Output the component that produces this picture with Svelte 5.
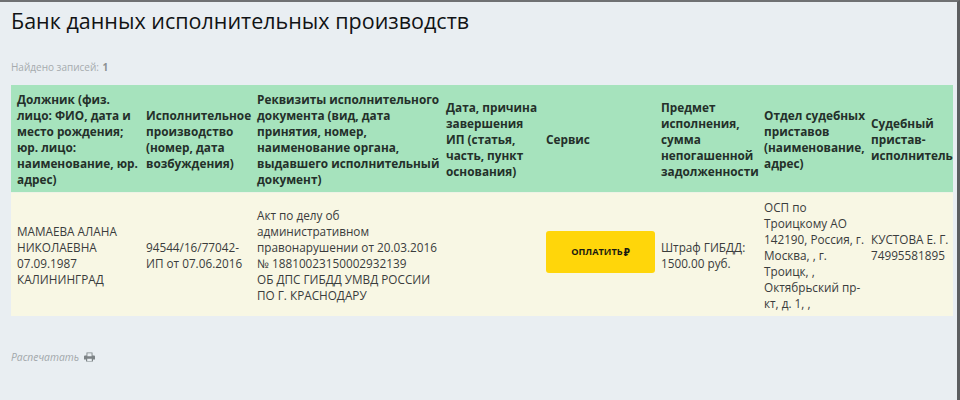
<script>
  const headers = [
    'Должник (физ. лицо: ФИО, дата и место рождения; юр. лицо: наименование, юр. адрес)',
    'Исполнительное производство (номер, дата возбуждения)',
    'Реквизиты исполнительного документа (вид, дата принятия, номер, наименование органа, выдавшего исполнительный документ)',
    'Дата, причина завершения ИП (статья, часть, пункт основания)',
    'Сервис',
    'Предмет исполнения, сумма непогашенной задолженности',
    'Отдел судебных приставов (наименование, адрес)',
    'Судебный пристав-исполнитель'
  ];
</script>

<div class="page">
  <h1>Банк данных исполнительных производств</h1>
  <p class="found">Найдено записей: <b>1</b></p>
  <table>
    <colgroup>
      <col class="c1" /><col class="c2" /><col class="c3" /><col class="c4" />
      <col class="c5" /><col class="c6" /><col class="c7" /><col class="c8" />
    </colgroup>
    <thead>
      <tr>
        {#each headers as h}
          <th>{h}</th>
        {/each}
      </tr>
    </thead>
    <tbody>
      <tr>
        <td>МАМАЕВА АЛАНА НИКОЛАЕВНА<br />07.09.1987<br />КАЛИНИНГРАД</td>
        <td>94544/16/77042-ИП от 07.06.2016</td>
        <td>Акт по делу об административном правонарушении от 20.03.2016<br />№ 18810023150002932139<br />ОБ ДПС ГИБДД УМВД РОССИИ ПО Г. КРАСНОДАРУ</td>
        <td></td>
        <td><button class="pay">ОПЛАТИТЬ<span class="rub">₽</span></button></td>
        <td>Штраф ГИБДД: 1500.00 руб.</td>
        <td>ОСП по Троицкому АО<br />142190, Россия, г. Москва, , г. Троицк, , Октябрьский пр-кт, д. 1, ,</td>
        <td>КУСТОВА Е. Г.<br />74995581895<br />&nbsp;</td>
      </tr>
    </tbody>
  </table>
  <div class="print">
    <em>Распечатать</em>
    <svg width="11" height="10" viewBox="0 0 11 10" aria-hidden="true">
      <path fill="#7d8386" fill-rule="evenodd" d="M2.5 0.5h6v3h1.5a1 1 0 0 1 1 1v3h-2v2h-7v-2h-2v-3a1 1 0 0 1 1-1h1.5zM3.4 1.3v2.9h4.2v-2.9zM3.2 6.8v2.2h4.6v-2.2z" />
    </svg>
  </div>
</div>

<style>
  :global(body) {
    margin: 0;
    background: #e9eef2;
  }
  .page {
    box-sizing: border-box;
    width: 960px;
    height: 400px;
    overflow: hidden;
    padding: 7px 3px 0 11px;
    border-top: 2px solid #6f7173;
    border-right: 3px solid #5c5e60;
    font-family: "Open Sans", "Noto Sans", sans-serif;
    color: #333;
  }
  h1 {
    margin: 0;
    font-size: 21.5px;
    line-height: 24px;
    font-weight: 500;
    color: #111315;
    white-space: nowrap;
  }
  .found {
    margin: 27px 0 0;
    font-size: 10px;
    line-height: 14px;
    color: #a6abae;
  }
  .found b {
    margin-left: 1px;
    color: #8b9093;
  }
  table {
    width: 942px;
    margin-top: 11px;
    border-collapse: separate;
    border-spacing: 0;
    table-layout: fixed;
    font-size: 11.75px;
    line-height: 16px;
  }
  .c1 { width: 129px; }
  .c2 { width: 111px; }
  .c3 { width: 189px; }
  .c4 { width: 100px; }
  .c5 { width: 115px; }
  .c6 { width: 103px; }
  .c7 { width: 107px; }
  .c8 { width: 88px; }
  th, td {
    box-sizing: border-box;
    padding: 0 0 0 6px;
    text-align: left;
    vertical-align: middle;
    overflow: visible;
  }
  th {
    height: 108px;
    background: #a6e3bd;
    font-weight: 700;
    font-size: 11.8px;
    color: #24302a;
    border-bottom: 1px solid #eef3e6;
  }
  td {
    height: 123px;
    background: #f8f7e4;
    color: #3a3c3c;
  }
  .pay {
    display: flex;
    align-items: center;
    justify-content: center;
    width: 109px;
    height: 42px;
    margin-bottom: 6px;
    padding: 0;
    border: 0;
    border-radius: 3px;
    background: #ffd60a;
    color: #1a1a10;
    font-family: inherit;
    font-size: 9.2px;
    font-weight: 700;
  }
  .rub {
    margin-left: 1px;
    font-size: 10px;
    font-weight: 800;
  }
  .print {
    display: flex;
    align-items: center;
    gap: 5px;
    margin-top: 34px;
    font-size: 10.3px;
    line-height: 14px;
    color: #a2a7aa;
  }
</style>
